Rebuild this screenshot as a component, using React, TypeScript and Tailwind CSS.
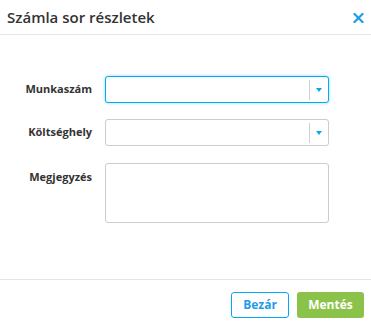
import type { ReactNode } from 'react';

function FieldRow({ label, children, top = false }: { label: string; children: ReactNode; top?: boolean }) {
  return (
    <div className={`flex ${top ? 'items-start' : 'items-center'}`}>
      <label className={`w-[92px] shrink-0 text-right text-[11px] font-bold text-[#333] ${top ? 'pt-[7px]' : ''}`}>{label}</label>
      <div className="ml-[13px] w-[224px]">{children}</div>
    </div>
  );
}

function SelectBox({ focused = false }: { focused?: boolean }) {
  return (
    <div
      className={`flex h-[27px] items-center rounded-[3px] border bg-white ${
        focused ? 'border-[#03a9f4] shadow-[0_0_3px_rgba(3,169,244,0.5)]' : 'border-[#ccc]'
      }`}
    >
      <div className="flex-1" />
      <div className="h-[20px] w-px bg-[#d0d0d0]" />
      <div className="flex w-[18px] items-center justify-center">
        <svg width="6" height="4" viewBox="0 0 6 4">
          <path d="M0 0h6L3 4z" fill="#03a9f4" />
        </svg>
      </div>
    </div>
  );
}

export default function App() {
  return (
    <div className="flex h-[322px] w-[371px] flex-col bg-white font-['Open_Sans',sans-serif]">
      <div className="flex h-[35px] items-center justify-between border-b border-[#e5e5e5] pl-[7px] pr-[7px]">
        <h2 className="text-[15px] font-semibold text-[#333]">Számla sor részletek</h2>
        <svg width="11" height="10" viewBox="0 0 11 10" className="mt-[1px]">
          <path d="M1.5 1l8 8M9.5 1l-8 8" stroke="#1e9be9" strokeWidth="2.2" strokeLinecap="square" />
        </svg>
      </div>

      <div className="flex flex-1 flex-col gap-[16px] border-b border-[#e5e5e5] pt-[41px]">
        <FieldRow label="Munkaszám">
          <SelectBox focused />
        </FieldRow>
        <FieldRow label="Költséghely">
          <SelectBox />
        </FieldRow>
        <FieldRow label="Megjegyzés" top>
          <textarea className="mt-[1px] block h-[60px] w-full resize-none rounded-[3px] border border-[#ccc] outline-none" />
        </FieldRow>
      </div>

      <div className="flex h-[42px] items-start justify-end gap-[8px] pr-[7px] pt-[12px]">
        <button className="h-[26px] w-[58px] rounded-[3px] border border-[#03a9f4] bg-white text-[12px] font-bold text-[#1e9be9]">
          Bezár
        </button>
        <button className="h-[26px] w-[67px] rounded-[3px] bg-[#8bc34a] text-[12px] font-bold text-white">Mentés</button>
      </div>
    </div>
  );
}
